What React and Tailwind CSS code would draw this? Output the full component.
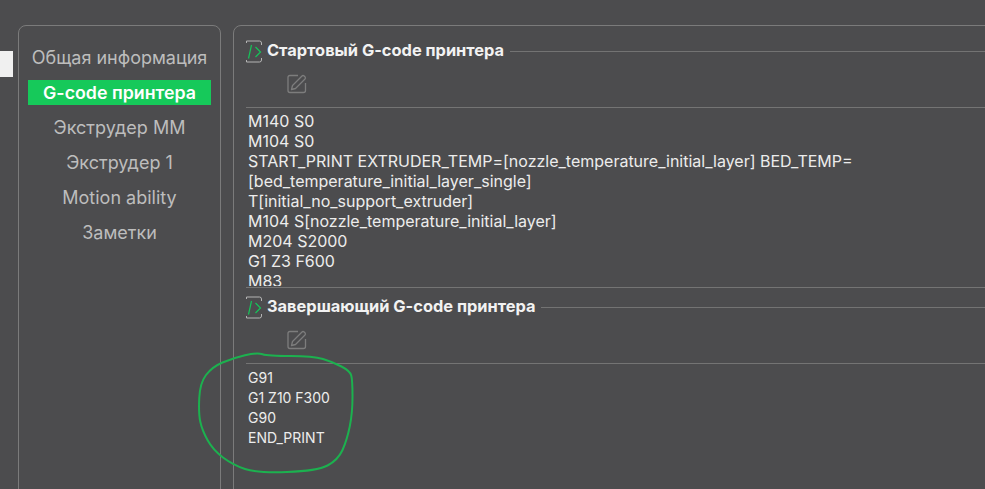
const navItems = ['Общая информация', 'G-code принтера', 'Экструдер MM', 'Экструдер 1', 'Motion ability', 'Заметки'];

const startCode = [
  'M140 S0',
  'M104 S0',
  'START_PRINT EXTRUDER_TEMP=[nozzle_temperature_initial_layer] BED_TEMP=',
  '[bed_temperature_initial_layer_single]',
  'T[initial_no_support_extruder]',
  'M104 S[nozzle_temperature_initial_layer]',
  'M204 S2000',
  'G1 Z3 F600',
  'M83',
];

const endCode = ['G91', 'G1 Z10 F300', 'G90', 'END_PRINT'];

const CodeIcon = () => (
  <svg width="16" height="23" viewBox="0 0 16 23" fill="none" className="shrink-0">
    <path d="M0.5 1H13.5Q15.5 1 15.5 3V5M0.5 1V3M0.5 22H13.5Q15.5 22 15.5 20V18M0.5 22V20" stroke="#b4b4b4" strokeWidth="1" />
    <path d="M5.5 5L2.5 18.5M9.5 7L14.5 12L9.5 17" stroke="#16c45a" strokeWidth="1.2" />
  </svg>
);

const EditIcon = () => (
  <svg width="20" height="20" viewBox="0 0 20 20" fill="none">
    <path d="M11 1.5H3Q1 1.5 1 3.5V16.5Q1 18.5 3 18.5H16.5Q18.5 18.5 18.5 16.5V9" stroke="#7d7d7d" strokeWidth="1.3" />
    <path d="M4.5 15.5L5.5 11.5L15 2Q16 1 17.2 2L18 2.8Q19 4 18 5L8.5 14.5Z" stroke="#7d7d7d" strokeWidth="1.3" strokeLinejoin="round" />
  </svg>
);

const Section = ({ title, lines, codeClass, codeHeight }) => (
  <div>
    <div className="flex items-center h-[23px]">
      <CodeIcon />
      <h2 className="ml-[5px] pb-[3px] text-[16.4px] font-bold text-[#f2f2f2] whitespace-nowrap">{title}</h2>
      <div className="ml-[6px] flex-1 h-px bg-[#737373]" />
    </div>
    <div className="pl-[41px] pt-[11px] h-[44px]">
      <EditIcon />
    </div>
    <div className="border-t border-[#747474] pl-[2px] pt-[3px]">
      <div className={`overflow-hidden text-[#ececec] ${codeClass} ${codeHeight}`}>
        {lines.map((line) => (
          <div key={line}>{line}</div>
        ))}
      </div>
    </div>
  </div>
);

// hand-drawn marker outline, smoothed through the midpoints
const circlePoints = [
  [257, 352.5], [268, 356], [313, 356], [333, 362], [350, 371], [352.5, 380], [352.5, 413],
  [347, 440], [338, 460], [317, 471], [257, 473], [233, 465], [213, 450], [202, 430],
  [198.5, 413], [200, 383], [212, 367], [233, 358],
];

const circlePath = circlePoints
  .map((p, i) => {
    const next = circlePoints[(i + 1) % circlePoints.length];
    const mid = [(p[0] + next[0]) / 2, (p[1] + next[1]) / 2];
    return `${i === 0 ? `M${(circlePoints[circlePoints.length - 1][0] + p[0]) / 2} ${(circlePoints[circlePoints.length - 1][1] + p[1]) / 2}` : ''}Q${p[0]} ${p[1]} ${mid[0]} ${mid[1]}`;
  })
  .join('');

export default function App() {
  return (
    <div className="relative h-screen w-full overflow-hidden bg-[#4c4c4e] font-['Inter',sans-serif]">
      <div className="flex h-full">
        <div className="w-[13px] h-[26px] mt-[51px] mr-[5px] bg-[#f0f0f0] shrink-0" />

        {/* Left navigation */}
        <nav className="mt-[25px] w-[203px] h-[600px] shrink-0 rounded-t-lg border border-[#7b7b7b] pt-[19px] pl-[9px] pr-[9px] flex flex-col gap-[10px]">
          {navItems.map((item) => (
            <div
              key={item}
              className={
                item === 'G-code принтера'
                  ? 'h-[25px] leading-[25px] text-center text-[17.8px] font-semibold text-white bg-[#16c95a]'
                  : 'h-[25px] leading-[26px] text-center text-[18px] text-[#bdbdbd] whitespace-nowrap'
              }
            >
              {item}
            </div>
          ))}
        </nav>

        {/* Main panel */}
        <main className="mt-[25px] ml-[12px] w-[800px] h-[600px] shrink-0 rounded-t-lg border border-[#7b7b7b] pt-[14px] pl-[12px]">
          <Section
            title="Стартовый G-code принтера"
            lines={startCode}
            codeClass="text-base leading-[20px]"
            codeHeight="h-[175px] mb-[1px]"
          />
          <div className="border-t border-[#747474] pt-[8px]">
            <Section
              title="Завершающий G-code принтера"
              lines={endCode}
              codeClass="text-sm leading-[20px] pt-[1px]"
              codeHeight="h-[100px]"
            />
          </div>
        </main>
      </div>

      {/* Hand-drawn circle over the end code */}
      <svg className="absolute inset-0 pointer-events-none" width="985" height="489" fill="none">
        <path d={circlePath} stroke="#1cb14f" strokeWidth="2" strokeLinejoin="round" />
      </svg>
    </div>
  );
}
